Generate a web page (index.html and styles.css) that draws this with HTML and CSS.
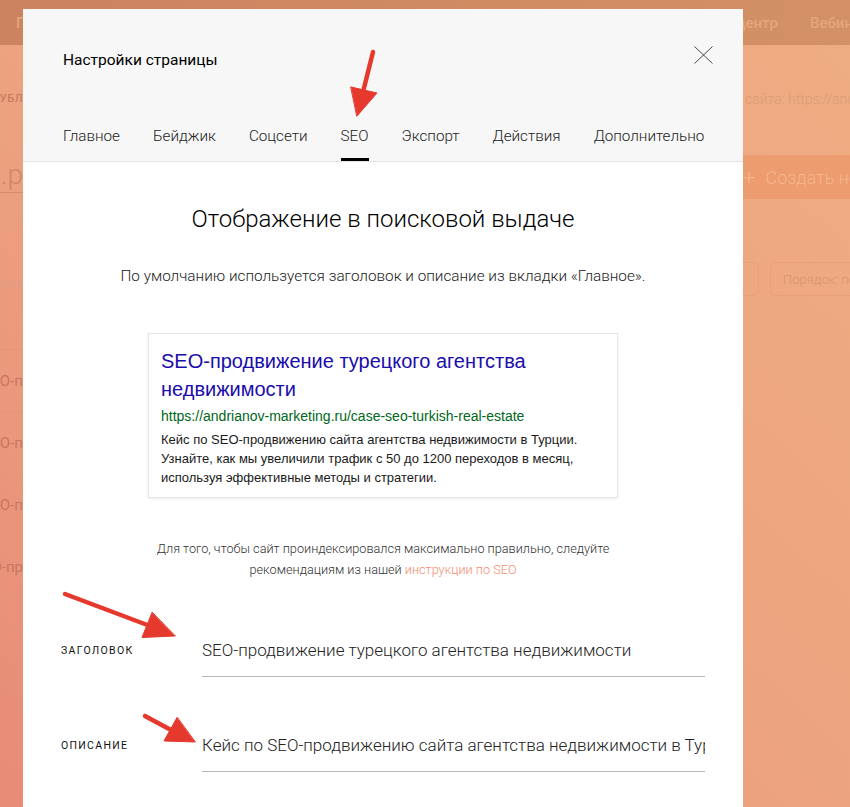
FILE: index.html
```html
<!DOCTYPE html>
<html lang="ru">
<head>
<meta charset="utf-8">
<title>Настройки страницы</title>
<link rel="stylesheet" href="styles.css">
</head>
<body>
<div class="page">
  <header class="topbar">
    <span class="nav-item">Главная</span>
    <span class="nav-spacer"></span>
    <span class="nav-item">Бизнес-центр</span>
    <span class="nav-item nav-last">Вебинары</span>
  </header>
  <div class="bg-body">
    <div class="bg-left">
      <div class="bg-frag bg-sub"><span>ОПУБЛ</span></div>
      <div class="bg-frag bg-project"><span>marketing.р</span></div>
      <div class="bg-frag bg-caption"><span>Стра</span></div>
      <div class="bg-rows">
        <div class="bg-frag bg-row"><span>SEO-п</span></div>
        <div class="bg-frag bg-row"><span>SEO-п</span></div>
        <div class="bg-frag bg-row"><span>SEO-п</span></div>
        <div class="bg-frag bg-row"><span>SEO-пр</span></div>
      </div>
    </div>
    <div class="bg-center"></div>
    <div class="bg-right">
      <div class="bg-address">сайта: https://andrianov-marketing.ru</div>
      <div class="bg-create"><span class="bg-plus">+</span> Создать новую страницу</div>
      <div class="bg-filters">
        <span class="bg-box bg-search"></span>
        <span class="bg-box bg-order">Порядок: по дате</span>
      </div>
    </div>
  </div>
</div>

<div class="modal" role="dialog" aria-label="Настройки страницы">
  <div class="modal-head">
    <div class="head-row">
      <h1 class="modal-title">Настройки страницы</h1>
      <button class="close" aria-label="Закрыть">
        <svg width="19" height="18" viewBox="0 0 19 18"><path d="M0.5 0.5L18.5 17.5M18.5 0.5L0.5 17.5" stroke="#4a4a4a" stroke-width="1" fill="none"/></svg>
      </button>
    </div>
    <nav class="tabs">
      <a class="tab">Главное</a>
      <a class="tab">Бейджик</a>
      <a class="tab">Соцсети</a>
      <a class="tab tab-active">SEO</a>
      <a class="tab">Экспорт</a>
      <a class="tab">Действия</a>
      <a class="tab">Дополнительно</a>
    </nav>
  </div>
  <div class="modal-body">
    <h2 class="section-title">Отображение в поисковой выдаче</h2>
    <p class="section-lead">По умолчанию используется заголовок и описание из вкладки «Главное».</p>
    <div class="snippet">
      <div class="snippet-title">SEO-продвижение турецкого агентства недвижимости</div>
      <div class="snippet-url">https://andrianov-marketing.ru/case-seo-turkish-real-estate</div>
      <div class="snippet-desc">Кейс по SEO-продвижению сайта агентства недвижимости в Турции. Узнайте, как мы увеличили трафик с 50 до 1200 переходов в месяц, используя эффективные методы и стратегии.</div>
    </div>
    <p class="note">Для того, чтобы сайт проиндексировался максимально правильно, следуйте<br>рекомендациям из нашей <a class="note-link">инструкции по SEO</a></p>
    <div class="field">
      <label class="field-label">Заголовок</label>
      <input class="field-input" type="text" value="SEO-продвижение турецкого агентства недвижимости">
    </div>
    <div class="field field-next">
      <label class="field-label">Описание</label>
      <input class="field-input" type="text" value="Кейс по SEO-продвижению сайта агентства недвижимости в Турции. Узнайте, как мы увеличили трафик с 50 до 1200 переходов в месяц, используя эффективные методы и стратегии.">
    </div>
  </div>
</div>

<svg class="arrows" width="850" height="807" viewBox="0 0 850 807">
  <g fill="#e5392e" stroke="#e5392e" stroke-linecap="round" stroke-linejoin="round">
    <line x1="373" y1="52" x2="363" y2="92" stroke-width="4.5"/>
    <polygon points="351,87 377,93 357,116" stroke-width="1"/>
    <line x1="65" y1="594" x2="150" y2="626" stroke-width="4.5"/>
    <polygon points="152,612.5 142,637.5 175,636" stroke-width="1"/>
    <line x1="145" y1="716" x2="171" y2="730" stroke-width="4.5"/>
    <polygon points="177,717.5 164,741 195,742" stroke-width="1"/>
  </g>
</svg>
</body>
</html>
```

FILE: styles.css
```css
* { box-sizing: border-box; }

html, body {
  margin: 0;
  padding: 0;
}

body {
  width: 850px;
  height: 807px;
  overflow: hidden;
  font-family: Roboto, "Noto Sans", "Liberation Sans", sans-serif;
  background: linear-gradient(to bottom left, #efad83 0%, #eca27f 55%, #e88b77 100%);
}

/* ---------- page behind the dialog ---------- */
.page {
  width: 850px;
  height: 807px;
}

.topbar {
  height: 45px;
  display: flex;
  align-items: center;
  gap: 32px;
  padding-left: 16px;
  background: linear-gradient(to right, #cc8360, #d39165);
  color: #e6a67b;
  font-size: 15px;
  font-weight: 500;
  white-space: nowrap;
  overflow: hidden;
}

.nav-spacer { flex: 1; }

.nav-last {
  flex: 0 0 40px;
  min-width: 0;
}

.bg-body {
  display: grid;
  grid-template-columns: 23px 720px 1fr;
}

.bg-left {
  display: flex;
  flex-direction: column;
  overflow: hidden;
}

.bg-frag {
  display: flex;
  justify-content: flex-end;
  white-space: nowrap;
}

.bg-sub {
  margin-top: 47px;
  font-size: 11px;
  font-weight: 500;
  letter-spacing: 0.5px;
  color: #c97a5f;
  line-height: 14px;
}

.bg-project {
  margin-top: 52px;
  font-size: 28px;
  font-weight: 300;
  line-height: 34px;
  color: #d4846b;
  border-bottom: 1px solid #d88a70;
}

.bg-caption {
  margin-top: 80px;
  font-size: 14px;
  line-height: 20px;
  color: #e39c82;
}

.bg-rows {
  margin-top: 56px;
  border-top: 1px solid #e5937a;
}

.bg-row {
  height: 62px;
  align-items: center;
  font-size: 15px;
  color: #c9765f;
  border-bottom: 1px solid #e5937a;
}

.bg-right {
  display: flex;
  flex-direction: column;
  white-space: nowrap;
  overflow: hidden;
}

.bg-address {
  margin-top: 44px;
  padding-left: 2px;
  font-size: 14px;
  font-weight: 300;
  line-height: 20px;
  color: #dc9c74;
}

.bg-create {
  margin-top: 46px;
  height: 44px;
  display: flex;
  align-items: center;
  gap: 10px;
  padding-left: 0;
  background: #ec9c6e;
  color: #f4b68d;
  font-size: 18px;
  font-weight: 300;
}

.bg-plus { font-size: 22px; }

.bg-filters {
  margin-top: 63px;
  display: flex;
  gap: 11px;
  margin-left: -40px;
}

.bg-box {
  height: 34px;
  border: 1px solid #e9a07a;
  border-radius: 5px;
  display: flex;
  align-items: center;
}

.bg-search { width: 56px; flex: 0 0 56px; }

.bg-order {
  padding-left: 12px;
  font-size: 13px;
  font-weight: 300;
  color: #d99370;
  width: 160px;
  flex: 0 0 160px;
}

/* ---------- dialog ---------- */
.modal {
  position: fixed;
  left: 23px;
  top: 9px;
  width: 720px;
  height: 820px;
  background: #ffffff;
  z-index: 5;
}

.modal-head {
  background: #f7f7f7;
  border-bottom: 1px solid #e2e2e2;
  padding: 37px 30px 0 40px;
}

.head-row {
  display: flex;
  justify-content: space-between;
  align-items: flex-start;
}

.modal-title {
  margin: 3px 0 0;
  font-size: 15.5px;
  font-weight: 400;
  line-height: 22px;
  color: #000;
}

.close {
  border: 0;
  padding: 0;
  margin: 0;
  background: none;
  width: 19px;
  height: 18px;
  display: block;
}

.close svg { display: block; }

.tabs {
  display: flex;
  gap: 33px;
  margin-top: 55px;
}

.tab {
  font-size: 15.25px;
  font-weight: 300;
  line-height: 20px;
  color: #222;
  padding-bottom: 12px;
  border-bottom: 3px solid transparent;
  white-space: nowrap;
}

.tab-active { border-bottom-color: #000; }

.modal-body {
  padding: 0 38px;
  display: flex;
  flex-direction: column;
}

.section-title {
  margin: 42px 0 0;
  text-align: center;
  font-size: 24px;
  font-weight: 300;
  line-height: 30px;
  color: #000;
}

.section-lead {
  margin: 32px 0 0;
  text-align: center;
  font-size: 15.3px;
  font-weight: 300;
  line-height: 20px;
  color: #222;
}

.snippet {
  margin: 47px auto 0;
  width: 470px;
  padding: 13px 12px 10px;
  border: 1px solid #e6e6e6;
  box-shadow: 0 1px 3px rgba(0, 0, 0, 0.07);
  background: #fff;
  font-family: "Liberation Sans", Arial, sans-serif;
}

.snippet-title {
  font-size: 20px;
  line-height: 28px;
  color: #1a0dab;
}

.snippet-url {
  margin-top: 2px;
  font-size: 14px;
  line-height: 22px;
  color: #006621;
}

.snippet-desc {
  margin-top: 3px;
  font-size: 13px;
  line-height: 19px;
  color: #1a1a1a;
}

.note {
  margin: 40px 0 0;
  text-align: center;
  font-size: 12.7px;
  font-weight: 300;
  line-height: 21px;
  color: #333;
}

.note-link { color: #f58c70; }

.field {
  margin-top: 43px;
  display: grid;
  grid-template-columns: 141px 1fr;
  align-items: center;
}

.field-next { margin-top: 41px; }

.field-label {
  font-size: 10.5px;
  font-weight: 400;
  letter-spacing: 1.3px;
  text-transform: uppercase;
  color: #111;
}

.field-input {
  width: 100%;
  height: 54px;
  padding: 0;
  border: 0;
  border-bottom: 1px solid #b5b5b5;
  background: transparent;
  outline: none;
  font-family: Roboto, "Noto Sans", sans-serif;
  font-size: 17px;
  font-weight: 300;
  color: #222;
}

/* ---------- annotation arrows ---------- */
.arrows {
  position: fixed;
  left: 0;
  top: 0;
  pointer-events: none;
  z-index: 10;
}
```
